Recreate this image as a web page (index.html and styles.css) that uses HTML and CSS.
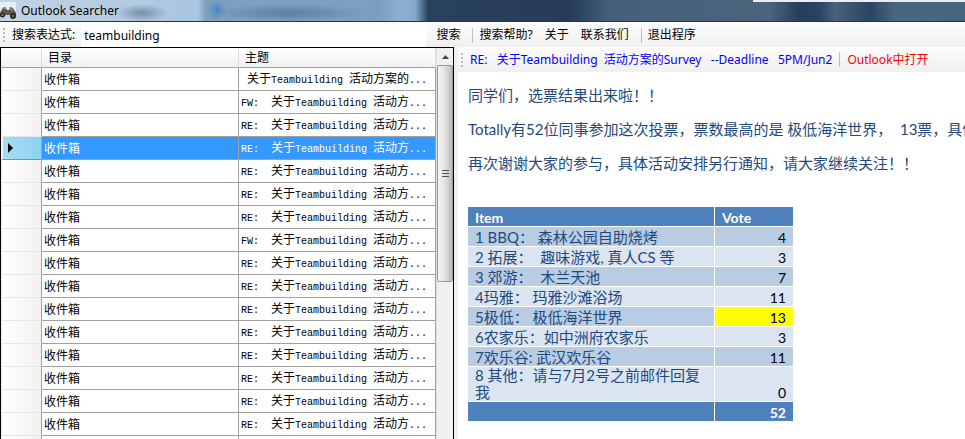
FILE: index.html
```html
<!DOCTYPE html>
<html lang="zh-CN">
<head>
<meta charset="utf-8">
<title>Outlook Searcher</title>
<link rel="stylesheet" href="styles.css">
</head>
<body>
<header class="titlebar">
  <svg class="app-icon" width="18" height="18" viewBox="0 0 18 18" aria-hidden="true">
    <path d="M0 0h16v13H0z" fill="#e4edf3"/>
    <path d="M0 11 2 7l2-2 2 1 1 2h2l1-3 3 1 3 5v3l-3 1-3-2H6l-3 2-3-1z" fill="#5a5751"/>
    <circle cx="2.500" cy="13" r="2.500" fill="#292a2c"/>
    <circle cx="13" cy="14" r="3" fill="#292a2c"/>
    <circle cx="2.500" cy="13" r="1" fill="#8a8172"/>
    <circle cx="13" cy="14" r="1" fill="#8a8172"/>
    <path d="m4 7 2-1M10 7l3 1" stroke="#a58d69" stroke-width="1.500"/>
  </svg>
  <h1 class="app-title">Outlook Searcher</h1>
</header>
<form class="toolbar">
  <span class="grip"></span>
  <label for="query">搜索表达式:</label>
  <input id="query" class="query" type="text" value="teambuilding">
  <button type="button">搜索</button>
  <span class="divider"></span>
  <button type="button">搜索帮助?</button>
  <button type="button">关于</button>
  <button type="button">联系我们</button>
  <span class="divider"></span>
  <button type="button">退出程序</button>
</form>
<main class="panes">
  <section class="results">
    <table class="grid">
      <colgroup><col class="c-mark"><col class="c-folder"><col class="c-subject"></colgroup>
      <thead><tr><th></th><th>目录</th><th>主题</th></tr></thead>
      <tbody>
        <tr><td></td><td>收件箱</td><td><i> </i>关于<i>Teambuilding </i>活动方案的<i>...</i></td></tr>
        <tr><td></td><td>收件箱</td><td><i>FW:  </i>关于<i>Teambuilding </i>活动方<i>...</i></td></tr>
        <tr><td></td><td>收件箱</td><td><i>RE:  </i>关于<i>Teambuilding </i>活动方<i>...</i></td></tr>
        <tr class="selected"><td><svg width="5" height="10" viewBox="0 0 5 10" aria-hidden="true"><path d="M0 0l5 5-5 5z"/></svg></td><td>收件箱</td><td><i>RE:  </i>关于<i>Teambuilding </i>活动方<i>...</i></td></tr>
        <tr><td></td><td>收件箱</td><td><i>RE:  </i>关于<i>Teambuilding </i>活动方<i>...</i></td></tr>
        <tr><td></td><td>收件箱</td><td><i>RE:  </i>关于<i>Teambuilding </i>活动方<i>...</i></td></tr>
        <tr><td></td><td>收件箱</td><td><i>RE:  </i>关于<i>Teambuilding </i>活动方<i>...</i></td></tr>
        <tr><td></td><td>收件箱</td><td><i>FW:  </i>关于<i>Teambuilding </i>活动方<i>...</i></td></tr>
        <tr><td></td><td>收件箱</td><td><i>RE:  </i>关于<i>Teambuilding </i>活动方<i>...</i></td></tr>
        <tr><td></td><td>收件箱</td><td><i>RE:  </i>关于<i>Teambuilding </i>活动方<i>...</i></td></tr>
        <tr><td></td><td>收件箱</td><td><i>RE:  </i>关于<i>Teambuilding </i>活动方<i>...</i></td></tr>
        <tr><td></td><td>收件箱</td><td><i>RE:  </i>关于<i>Teambuilding </i>活动方<i>...</i></td></tr>
        <tr><td></td><td>收件箱</td><td><i>RE:  </i>关于<i>Teambuilding </i>活动方<i>...</i></td></tr>
        <tr><td></td><td>收件箱</td><td><i>RE:  </i>关于<i>Teambuilding </i>活动方<i>...</i></td></tr>
        <tr><td></td><td>收件箱</td><td><i>RE:  </i>关于<i>Teambuilding </i>活动方<i>...</i></td></tr>
        <tr><td></td><td>收件箱</td><td><i>RE:  </i>关于<i>Teambuilding </i>活动方<i>...</i></td></tr>
        <tr><td></td><td></td><td></td></tr>
      </tbody>
    </table>
    <div class="scrollbar">
      <button class="scroll-up" type="button" aria-label="向上滚动"><svg width="7" height="4" viewBox="0 0 7 4" aria-hidden="true"><path d="M0 4l3.500-4L7 4z" fill="#444"/></svg></button>
      <div class="thumb"><svg width="7" height="8" viewBox="0 0 7 8" aria-hidden="true"><path d="M0 .5h7M0 3.500h7M0 6.500h7" stroke="#555"/></svg></div>
    </div>
  </section>
  <section class="message">
    <div class="subjectbar">
      <span class="grip"></span>
      <a class="subject" href="#">RE:   关于Teambuilding  活动方案的Survey   --Deadline   5PM/Jun2</a>
      <span class="divider"></span>
      <a class="open-link" href="#">Outlook中打开</a>
    </div>
    <article class="mail">
      <p>同学们，选票结果出来啦！！</p>
      <p>Totally有52位同事参加这次投票，票数最高的是 极低海洋世界，  13票，具体</p>
      <p>再次谢谢大家的参与，具体活动安排另行通知，请大家继续关注！！</p>
      <table class="votes">
        <colgroup><col class="v-item"><col class="v-count"></colgroup>
        <thead><tr><th>Item</th><th>Vote</th></tr></thead>
        <tbody>
          <tr><td>1 BBQ： 森林公园自助烧烤</td><td>4</td></tr>
          <tr><td>2 拓展：  趣味游戏, 真人CS 等</td><td>3</td></tr>
          <tr><td>3 郊游：  木兰天池</td><td>7</td></tr>
          <tr><td>4玛雅： 玛雅沙滩浴场</td><td>11</td></tr>
          <tr><td>5极低： 极低海洋世界</td><td class="winner">13</td></tr>
          <tr><td>6农家乐：如中洲府农家乐</td><td>3</td></tr>
          <tr><td>7欢乐谷: 武汉欢乐谷</td><td>11</td></tr>
          <tr><td>8 其他：请与7月2号之前邮件回复我</td><td>0</td></tr>
        </tbody>
        <tfoot><tr><td></td><td>52</td></tr></tfoot>
      </table>
    </article>
  </section>
</main>
</body>
</html>
```
FILE: styles.css
```css
* { box-sizing: border-box; }

body {
  margin: 0;
  height: 100vh;
  overflow: hidden;
  display: flex;
  flex-direction: column;
  background: #f0f0f0;
  color: #000;
  font: 12px/16px "Noto Sans", "Noto Sans CJK SC", sans-serif;
}

button {
  border: 0;
  padding: 0;
  background: none;
  color: inherit;
  font: inherit;
}

.titlebar {
  flex: none;
  height: 22px;
  display: flex;
  align-items: center;
  gap: 3px;
  border-bottom: 1px solid #26364a;
  background:
    linear-gradient(#e9eef0, #e9eef0) 100% 0 / 22% 2px no-repeat,
    radial-gradient(ellipse 26px 9px at 142px 13px, #7890a8, transparent),
    radial-gradient(ellipse 10px 10px at 217px 10px, #4a86c4, transparent),
    radial-gradient(ellipse 75px 9px at 290px 13px, #5f7f9f, transparent),
    linear-gradient(90deg, #c3d3e3 0, #b4cae1 120px, #a9c5e2 198px, #7f9fc0 206px, #7d9ebf 380px, #8db0d2 400px, #86a9cc 415px, #2a415d 428px, #263c57 570px, #46607a 610px, #4b647c 770px, #243e5b 800px, #2a4562 820px, #49627b 835px, #2a4562 870px, #49657f 895px, #486580 100%);
}

.app-icon { flex: none; }

.app-title {
  margin: 0;
  font-size: 12px;
  font-weight: 400;
}

.toolbar {
  flex: none;
  height: 25px;
  display: flex;
  align-items: center;
  padding: 0 3px;
  border-top: 1px solid #fff;
  background: linear-gradient(#fcfcfc, #f0f0f0);
  white-space: nowrap;
}

.toolbar label { margin: 0 6px 0 7px; }

.toolbar button { margin-right: 12px; }

.toolbar .divider { margin-right: 6px; }

.query {
  width: 36%;
  height: 24px;
  margin-right: 10px;
  padding: 0 3px;
  border: 0;
  outline: 0;
  background: #fff;
  font: inherit;
}

.grip {
  flex: none;
  width: 2px;
  height: 14px;
  background: repeating-linear-gradient(#b8b8b8 0 2px, transparent 2px 4px);
}

.divider {
  flex: none;
  width: 1px;
  height: 15px;
  margin-right: 7px;
  background: #bdbdbd;
}

.panes {
  flex: 1;
  min-height: 0;
  display: grid;
  grid-template-columns: 454fr 511fr;
}

.results {
  min-width: 0;
  overflow: hidden;
  display: flex;
  align-items: stretch;
  border: 1px solid #000;
  border-bottom: 0;
  background: #fff;
}

.grid {
  flex: 1;
  align-self: flex-start;
  width: 100%;
  min-width: 0;
  table-layout: fixed;
  border-collapse: separate;
  border-spacing: 0;
  white-space: pre;
}

.c-mark { width: 41px; }

.grid th {
  height: 20px;
  padding: 0 6px;
  border-right: 1px solid #ddd;
  border-bottom: 1px solid #a0a0a0;
  background: linear-gradient(#fff, #f1f1f1);
  font-weight: 400;
  text-align: left;
}

.grid td {
  height: 23px;
  padding: 1px 2px 0;
  border-right: 1px solid #a0a0a0;
  border-bottom: 1px solid #a0a0a0;
  overflow: hidden;
}

.grid td:first-child {
  padding: 0 5px;
  border-left: 2px solid #f4f4f4;
  border-bottom-color: #e6e6e6;
  background: linear-gradient(90deg, #fff, #f1f1f1);
}

.grid td:first-child svg { display: block; }

.grid i {
  font: 10px/16px "Liberation Mono", monospace;
}

.grid .selected td {
  background: #39f;
  color: #fff;
}

.grid .selected td:first-child {
  border-bottom-color: #5b9cc0;
  background: linear-gradient(90deg, #a6dcf4, #8dd3f4);
}

.scrollbar {
  flex: none;
  width: 17px;
  border-left: 1px solid #e0e0e0;
  background: #f0f0f0;
}

.scroll-up {
  width: 100%;
  height: 17px;
  display: grid;
  place-items: center;
}

.thumb {
  height: 217px;
  display: grid;
  place-items: center;
  border: 1px solid #989898;
  border-radius: 2px;
  background: linear-gradient(90deg, #f6f6f6, #e4e4e4 45%, #bcbcbc);
}

.message {
  min-width: 0;
  overflow: hidden;
  display: flex;
  flex-direction: column;
  border-left: 4px solid #f0f0f0;
  background: #fff;
}

.subjectbar {
  flex: none;
  height: 25px;
  display: flex;
  align-items: center;
  padding-left: 3px;
  background: linear-gradient(#fcfcfc, #f0f0f0);
  white-space: pre;
}

.subjectbar a { text-decoration: none; }

.subject {
  margin: 0 7px;
  color: #00f;
}

.open-link { color: #f00; }

.mail {
  padding: 12px 0 0 10px;
  color: #1f497d;
  font: 15px/22px Lato, "Noto Sans CJK SC", sans-serif;
}

.mail p {
  margin: 0 0 12px;
  white-space: pre;
}

.votes {
  width: 325px;
  margin-top: 33px;
  table-layout: fixed;
  border-collapse: separate;
  border-spacing: 0;
  font-family: Lato, "Noto Sans CJK TC", sans-serif;
  line-height: 17px;
}

.v-count { width: 79px; }

.votes th,
.votes td {
  height: 20px;
  padding: 0 7px;
  border-bottom: 1px solid #fff;
  font-size: 15px;
  text-align: left;
  vertical-align: bottom;
  white-space: pre-wrap;
}

.votes th,
.votes tfoot td {
  background: #4f81bd;
  color: #fff;
  font-size: 14px;
  font-weight: 700;
}

.votes th + th,
.votes td + td { border-left: 1px solid #fff; }

.votes tbody td { background: #dbe5f1; }
.votes tbody tr:nth-child(odd) td { background: #b8cce4; }

.votes td + td {
  color: #000;
  font-size: 14px;
  text-align: right;
}

.votes tfoot td + td { color: #fff; }
.votes tbody tr td.winner { background: #ff0; }
```
